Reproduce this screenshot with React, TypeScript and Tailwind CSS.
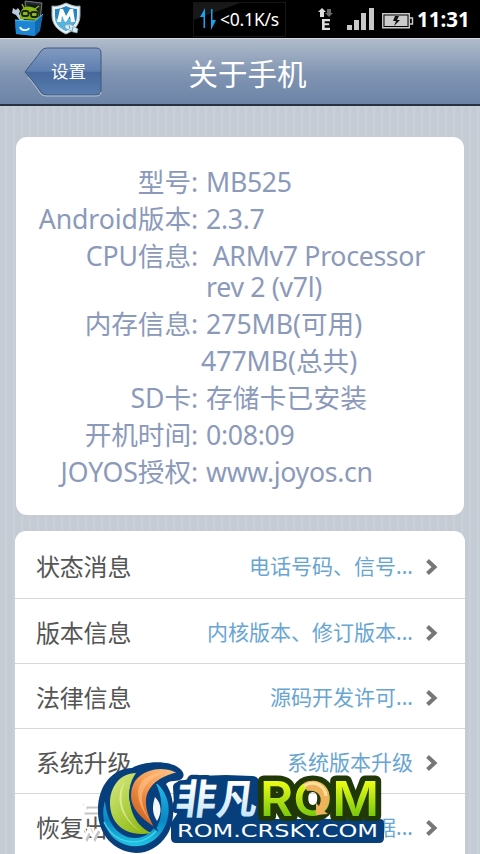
import clsx from 'clsx';

const info = [
    {label: '型号:', value: 'MB525'},
    {label: 'Android版本:', value: '2.3.7'},
    {label: 'CPU信息:', value: '\u00a0ARMv7 Processor rev 2 (v7l)'},
    {label: '内存信息:', value: '275MB(可用)', mixed: true},
    {label: '', value: '477MB(总共)', outdent: true, mixed: true},
    {label: 'SD卡:', value: '存储卡已安装', wide: true},
    {label: '开机时间:', value: '0:08:09'},
    {label: 'JOYOS授权:', value: 'www.joyos.cn'},
];

const items = [
    {title: '状态消息', detail: '电话号码、信号...'},
    {title: '版本信息', detail: '内核版本、修订版本...'},
    {title: '法律信息', detail: '源码开发许可...'},
    {title: '系统升级', detail: '系统版本升级'},
    {title: '恢复出厂', detail: '清除数据...'},
];

function ToolboxIcon() {
    return (
        <svg width="34" height="38" viewBox="0 0 34 38">
            <path d="M14 1 31 3 29 20 15 16Z" fill="#252b2d" stroke="#737b7e" />
            <path d="m17 4 11 1.5-1 9-11-2Z" fill="#111718" />
            <path d="m2 8 3 2 2-2 2 3-1 3 5 6-3 2-5-7-4-2Z" fill="#b9ccdf" />
            <path d="M9 19c-1-9 4-14 11-12 7 1 9 7 7 13Z" fill="#86b512" />
            <path d="m13 8-2-4m13 5 4-3" stroke="#86b512" strokeWidth="1.5" />
            <rect x="11" y="11" width="6.5" height="5" rx="2" fill="#8fb82a" stroke="#17250a" strokeWidth="1.8" />
            <rect x="20" y="12" width="6.5" height="5" rx="2" fill="#8fb82a" stroke="#17250a" strokeWidth="1.8" />
            <path d="M17 13h3" stroke="#17250a" strokeWidth="1.5" />
            <path d="m4 20 20 1 8-7-3 17-5 5-19-2Z" fill="#1268ac" />
            <path d="m4 20 20 1v15L5 34Z" fill="#1c86d3" />
            <path d="m4 20 20 1 8-7" fill="none" stroke="#5fc1f7" />
            <path d="M9 27c1 4 8 4 9 1" fill="none" stroke="#fff" strokeWidth="1.8" />
        </svg>
    );
}

function ShieldIcon() {
    return (
        <svg width="30" height="33" viewBox="0 0 30 33">
            <path d="M1 4c6 1 9-1 14-3 5 2 9 4 14 3v9c0 9-5 15-14 19C6 28 1 22 1 13Z" fill="#e9f1f5" stroke="#9eafb8" />
            <path d="M4 7c5 0 7-1 11-3 4 2 7 3 11 3v6c0 8-4 12-11 16C8 25 4 21 4 13Z" fill="#2685c3" />
            <path d="M4 17c6-2 14-1 20 2-2 5-5 8-9 10C8 26 5 22 4 17Z" fill="#58b4dc" />
            <path d="m6 20 3-13h3l3 7 4-7h3l2 13h-4l-1-6-4 6h-1l-3-6-1 6Z" fill="#fff" />
            <path d="m14 23 5-1 8 5-1 4-4-1-8-4Z" fill="#d6edf5" stroke="#739eb0" strokeWidth=".7" />
            <path d="m18 23 1 4m3-2-1 4" stroke="#739eb0" />
        </svg>
    );
}

function StatusBar() {
    return (
        <div className="flex h-[38px] shrink-0 items-center bg-black text-white">
            <div className="flex w-[193px] items-start pl-[11px]">
                <ToolboxIcon />
                <div className="ml-1.5 pt-0.5">
                    <ShieldIcon />
                </div>
            </div>
            <div className="flex h-[35px] w-[93px] items-center border border-[#161616] bg-linear-to-br from-[#181818] from-25% to-black to-26% pl-1.5 whitespace-nowrap">
                <svg className="shrink-0" width="16" height="22" viewBox="0 0 16 22" fill="#16a5f2">
                    <path d="M5 0v20H3.5V9H0ZM11 1h1.5v11H16l-5 10Z" />
                </svg>
                <span className="ml-1 text-[17.5px] leading-6 tracking-[-0.2px]">&lt;0.1K/s</span>
            </div>
            <svg className="ml-8" width="17" height="24" viewBox="0 0 17 24">
                <path d="m4 1 4 4H6v5H2V5H0Z" fill="#ddd" />
                <path d="M9 2h4v4h2l-4 4-4-4h2Z" fill="#686868" />
                <path d="M4 12h8v2.2H6.7v2h4.5v2H6.7v2.6H12V23H4Z" fill="#ddd" />
            </svg>
            <svg className="ml-3" width="28" height="22" viewBox="0 0 28 22" fill="#c8c8c8">
                <path d="M0 17h5v5H0ZM7 12h5v10H7ZM14 5h5v17h-5ZM22 0h5v22h-5Z" />
            </svg>
            <svg className="mt-[3px] ml-[7px]" width="32" height="16" viewBox="0 0 32 16">
                <path d="M.75.75h26.5v14H.75ZM27.5 5h3v6h-3" fill="none" stroke="#ccc" strokeWidth="1.4" />
                <path d="M2.5 2.5h23v10.5h-23Z" fill="#ccc" />
                <path d="m13 3-2 5h3l-2 5 6-6h-3l2-4Z" fill="#111" />
            </svg>
            <span className="ml-[3px] text-[20.5px] leading-6 font-bold">11:31</span>
        </div>
    );
}

function Header() {
    return (
        <div className="relative flex h-[68px] shrink-0 items-center justify-center border-t border-b-2 border-t-[#d5dae0] border-b-[#29313e] bg-linear-to-b from-[#b0bccb] via-[#8094b2] via-55% to-[#6c84a8]">
            <div className="absolute top-2 left-6 h-[50px] w-[78px]">
                <svg className="absolute inset-0" width="78" height="50" viewBox="0 0 78 50">
                    <defs>
                        <linearGradient id="back" x2="0" y2="1">
                            <stop offset="0" stopColor="#829ac0" />
                            <stop offset=".49" stopColor="#5d7eb0" />
                            <stop offset=".52" stopColor="#47699e" />
                            <stop offset="1" stopColor="#587dae" />
                        </linearGradient>
                    </defs>
                    <path d="M1 25C7 17 13 10 17 4q2-3 6-3h49q5 0 5 5v37q0 5-5 5H23q-4 0-6-3C12 38 7 32 1 25Z" fill="url(#back)" stroke="#435979" />
                    <path d="M4 30c5 6 9 11 12 16q2 3 6 3h50q5 0 5-4" fill="none" stroke="#b4c1d4" />
                </svg>
                <span className="relative block pt-3 pl-[27px] text-[17.5px] leading-6 text-white">设置</span>
            </div>
            <h1 className="pt-[5px] pl-[15px] text-[29.5px] leading-10 text-white">关于手机</h1>
        </div>
    );
}

function Logo() {
    return (
        <svg className="absolute bottom-0 left-[75px]" width="315" height="104" viewBox="75 750 315 104">
            <defs>
                <linearGradient id="green" x2=".7" y2="1">
                    <stop offset="0" stopColor="#dbe987" />
                    <stop offset=".5" stopColor="#b3d34a" />
                    <stop offset="1" stopColor="#91b917" />
                </linearGradient>
                <linearGradient id="orange" x1="1" y1="0" x2=".3" y2="1">
                    <stop offset="0" stopColor="#ffc98c" />
                    <stop offset=".5" stopColor="#f59b52" />
                    <stop offset="1" stopColor="#ce5d17" />
                </linearGradient>
                <linearGradient id="cyan" x2="0" y2="1">
                    <stop offset="0" stopColor="#24b9e8" />
                    <stop offset=".6" stopColor="#0a88c4" />
                    <stop offset="1" stopColor="#20c4e3" />
                </linearGradient>
                <linearGradient id="rom" x2="0" y2="1">
                    <stop offset=".2" stopColor="#efff16" />
                    <stop offset=".85" stopColor="#70c40b" />
                </linearGradient>
                <linearGradient id="ice" x2="0" y2="1">
                    <stop offset=".3" stopColor="#fff" />
                    <stop offset="1" stopColor="#b5defa" />
                </linearGradient>
            </defs>
            <path d="M83 804h17v3H86v6h14M83 831l4 8 4-8 4 8 4-8" fill="none" stroke="#c4c4c4" strokeWidth="3" />
            <path d="M81 802h18v3H85v6h15M81 829l4 8 4-8 4 8 4-8" fill="none" stroke="#fff" strokeWidth="3" />
            <path d="M98 812C97 786 113 768 132 768c13-7 36-8 47 0 8 6 5 13-5 13-4 0-6 1-8 3 9 13 10 37 1 51-8 12-19 18-31 18-22-1-38-19-38-41Z" fill="#073f7c" />
            <path d="M155 782c16 12 18 35 6 51-16 21-45 15-54-4-4-8-5-18-2-28 2 24 15 37 30 37 21 0 35-29 20-56Z" fill="url(#cyan)" />
            <path d="M153 784c10 12 11 31 3 45L145 812Z" fill="#073f7c" />
            <path d="M155 797c7 7 7 16 2 24-5-8-5-15-2-24Z" fill="#f4f6f7" />
            <path d="M136 773c-16 0-26 14-26 30 0 20 15 35 41 30-10-5-17-13-20-25-3-15-2-25 5-35Z" fill="url(#green)" />
            <path d="M125 781c-12 17-4 39 18 52-20-13-26-33-18-52Z" fill="#e2efa2" opacity=".8" />
            <path d="M179 773c-17-11-49-4-49 23 0 13 11 24 26 33-8-14-12-27-7-37s15-16 30-19Z" fill="url(#orange)" stroke="#07417d" strokeWidth="2" />
            <path d="M163 773c-27 1-34 23-11 50-16-22-13-40 11-50Z" fill="#ffc890" opacity=".55" />
            <path d="M104 822c11 23 38 26 52 9" fill="none" stroke="#43d2ed" strokeWidth="1.5" />
            <path d="M173 787q0-4 5-5l20-6 28-1 26 1q7 0 7 7v36h121q4 0 4 4v15q0 5-5 5H176q-5 0-5-5v-15l6-9-3-9Z" fill="#073f7c" />
            <g fontFamily="Noto Sans CJK SC, sans-serif" fontSize="41" fontWeight="700" transform="translate(0 814) skewX(-7)" fill="url(#ice)" stroke="#073f7c" strokeWidth="9" strokeLinejoin="round" paintOrder="stroke">
                <text x="174" y="0">
                    非凡
                </text>
            </g>
            <text y="815.5" fontFamily="Inter, sans-serif" fontSize="48" fontWeight="600" textLength="119" lengthAdjust="spacingAndGlyphs" x="260" fill="url(#rom)" stroke="#203708" strokeWidth="11" strokeLinejoin="round" paintOrder="stroke">
                ROM
            </text>
            <path d="M304 783c13-7 28 4 25 18-1 5-2 7-5 10l4 3-12 1 0-12 3 3c5-9-1-17-12-15Z" fill="#efb35c" />
            <path d="M304 786c10-6 21-1 22 10" fill="none" stroke="#ffdf9e" strokeWidth="3" />
            <path d="M256 821h124v17H256Z" fill="#073f7c" />
            <text x="177" y="837" fontFamily="DejaVu Sans, sans-serif" fontSize="17" textLength="201" lengthAdjust="spacingAndGlyphs" fill="#fff">
                ROM.CRSKY.COM
            </text>
        </svg>
    );
}

export default function App() {
    return (
        <div className="relative flex h-[854px] w-[480px] flex-col overflow-hidden bg-[#c5ccd5] font-['Noto_Sans','Noto_Sans_CJK_SC',sans-serif]">
            <StatusBar />
            <Header />
            <div className="flex flex-1 flex-col overflow-hidden bg-[repeating-linear-gradient(90deg,#c4cbd4_0px,#c4cbd4_4px,#cad1d8_6px,#c4cbd4_8px)] px-[15px] pt-[31px]">
                <div className="mx-px flex h-[378px] shrink-0 flex-col gap-1.5 rounded-[11px] bg-white pt-[29px] text-[26.67px] leading-[31px] tracking-[-0.1px] text-[#8b9aba]">
                    {info.map((row) => (
                        <div key={row.value} className="flex">
                            <div className="w-[182px] shrink-0 text-right whitespace-nowrap">{row.label}</div>
                            <div
                                className={clsx(
                                    'w-[235px]',
                                    row.outdent ? 'pl-[3px]' : 'pl-2',
                                    row.wide && 'tracking-[0.2px]',
                                    row.mixed && 'tracking-[-0.05px]',
                                    !row.wide && !row.mixed && 'tracking-[-0.3px]',
                                )}
                            >
                                {row.value}
                            </div>
                        </div>
                    ))}
                </div>
                <div className="mt-4 shrink-0 rounded-t-[11px] bg-white">
                    {items.map((item) => (
                        <div key={item.title} className="flex h-[65px] items-center border-b border-[#d5d8da] pt-2 pr-[27px] pb-1 pl-[21px] first:h-[68px]">
                            <span className="text-[24px] tracking-[-0.2px] text-[#555]">{item.title}</span>
                            <span className="ml-auto text-[21px] text-[#68a5d2]">{item.detail}</span>
                            <svg className="ml-3" width="13" height="18" viewBox="0 0 13 18">
                                <path d="m2.5 2.5 7 6.5-7 6.5" fill="none" stroke="#777" strokeWidth="4" />
                            </svg>
                        </div>
                    ))}
                </div>
            </div>
            <Logo />
        </div>
    );
}
